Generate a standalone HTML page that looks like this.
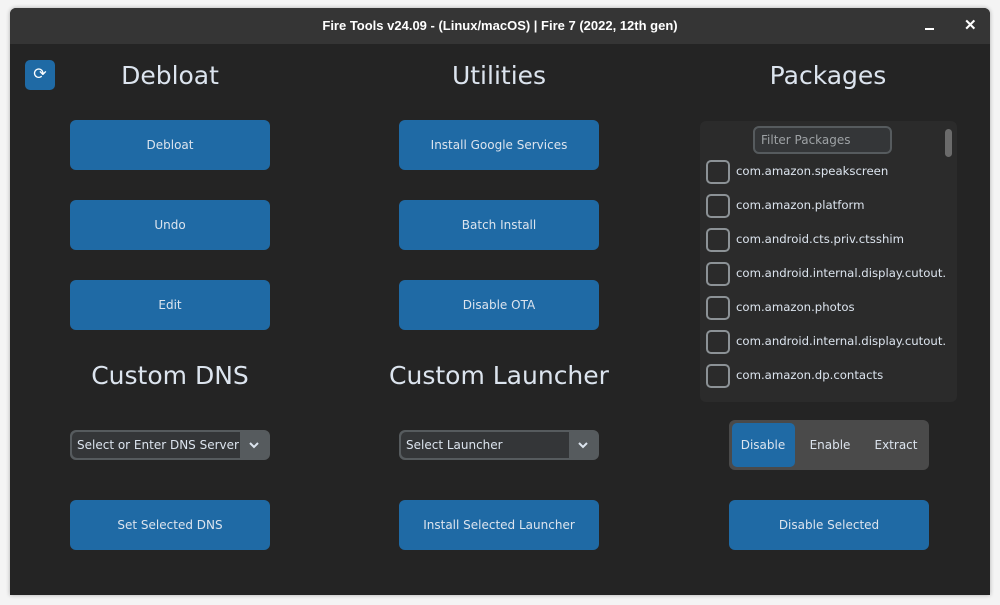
<!DOCTYPE html><html><head><style>
body{margin:0;width:1000px;height:605px;background:#f4f4f4;font-family:"Liberation Sans",sans-serif;position:relative;overflow:hidden}
.win{position:absolute;left:10px;top:8px;width:980px;height:587px;background:#242424;border-radius:6px 6px 0 0;overflow:hidden;box-shadow:0 0 4px rgba(0,0,0,.3)}
.tb{position:absolute;left:0;top:0;width:980px;height:36px;background:#353535;color:#fff;font-size:13px;font-weight:bold;text-align:center;line-height:36px}
.a{position:absolute}
.h{position:absolute;width:260px;text-align:center;color:#dce4ee;font-size:25px;font-family:"DejaVu Sans",sans-serif}
.b{position:absolute;width:200px;height:50px;background:#1f6aa5;border-radius:6px;color:#dce4ee;text-align:center;line-height:50px;font-family:"DejaVu Sans",sans-serif;font-size:12px}
.cb{position:absolute;width:200px;height:30px;border-radius:6px;background:#565b5e;}
.cb .t{position:absolute;left:2px;top:2px;width:168px;height:26px;background:#343638;border-radius:5px 0 0 5px;color:#dce4ee;line-height:26px;padding-left:5px;box-sizing:border-box;font-family:"DejaVu Sans",sans-serif;font-size:12px;white-space:nowrap;overflow:hidden}
.pk{position:absolute;left:6px;width:20px;height:20px;border:2px solid #8c9296;border-radius:5px}
.pl{position:absolute;left:36px;color:#dce4ee;font-size:11.7px;font-family:"DejaVu Sans",sans-serif;white-space:nowrap}
</style></head><body>
<div class="win">
<div class="tb">Fire Tools v24.09 - (Linux/macOS) | Fire 7 (2022, 12th gen)</div>
<div class="a" style="left:915px;width:9px;height:2px;background:#fff;top:20px"></div>
<div class="a" style="left:954px;top:8px;color:#fff;font-size:15px;font-weight:bold">✕</div>
<div class="a" style="left:15px;top:52px;width:30px;height:30px;background:#1f6aa5;border-radius:5px;color:#fff;text-align:center;line-height:30px;font-size:16px">⟳</div>
<div class="h" style="left:30px;top:53px">Debloat</div>
<div class="h" style="left:359px;top:53px">Utilities</div>
<div class="h" style="left:688px;top:53px">Packages</div>
<div class="h" style="left:30px;top:353px">Custom DNS</div>
<div class="h" style="left:339px;width:300px;top:353px">Custom Launcher</div>
<div class="b" style="left:60px;top:112px">Debloat</div>
<div class="b" style="left:60px;top:192px">Undo</div>
<div class="b" style="left:60px;top:272px">Edit</div>
<div class="b" style="left:389px;top:112px">Install Google Services</div>
<div class="b" style="left:389px;top:192px">Batch Install</div>
<div class="b" style="left:389px;top:272px">Disable OTA</div>
<div class="cb" style="left:60px;top:422px"><div class="t">Select or Enter DNS Server</div><svg class="a" style="left:178px;top:10px" width="12" height="10"><path d="M2 3l4 4 4-4" stroke="#dce4ee" stroke-width="2" fill="none"/></svg></div>
<div class="cb" style="left:389px;top:422px"><div class="t">Select Launcher</div><svg class="a" style="left:178px;top:10px" width="12" height="10"><path d="M2 3l4 4 4-4" stroke="#dce4ee" stroke-width="2" fill="none"/></svg></div>
<div class="b" style="left:60px;top:492px">Set Selected DNS</div>
<div class="b" style="left:389px;top:492px">Install Selected Launcher</div>
<div class="a" style="left:690px;top:113px;width:257px;height:281px;background:#2b2b2b;border-radius:6px;overflow:hidden">
<div class="a" style="left:53px;top:5px;width:139px;height:28px;border:2px solid #565b5e;border-radius:6px;background:#343638;box-sizing:border-box;color:#9ea2a5;font-size:12px;line-height:24px;padding-left:6px;font-family:'DejaVu Sans',sans-serif">Filter Packages</div>
<div class="a" style="left:245px;top:8px;width:7px;height:28px;background:#6b6b6b;border-radius:4px"></div>
<div class="pk" style="top:39px"></div><div class="pl" style="top:43px">com.amazon.speakscreen</div>
<div class="pk" style="top:73px"></div><div class="pl" style="top:77px">com.amazon.platform</div>
<div class="pk" style="top:107px"></div><div class="pl" style="top:111px">com.android.cts.priv.ctsshim</div>
<div class="pk" style="top:141px"></div><div class="pl" style="top:145px">com.android.internal.display.cutout.</div>
<div class="pk" style="top:175px"></div><div class="pl" style="top:179px">com.amazon.photos</div>
<div class="pk" style="top:209px"></div><div class="pl" style="top:213px">com.android.internal.display.cutout.</div>
<div class="pk" style="top:243px"></div><div class="pl" style="top:247px">com.amazon.dp.contacts</div>
</div>
<div class="a" style="left:719px;top:412px;width:200px;height:50px;background:#4a4a4a;border-radius:6px"></div>
<div class="a" style="left:722px;top:415px;width:63px;height:44px;background:#1f6aa5;border-radius:5px"></div>
<div class="a" style="left:719px;top:412px;width:68px;line-height:50px;text-align:center;color:#dce4ee;font-size:12px;font-family:'DejaVu Sans',sans-serif">Disable</div>
<div class="a" style="left:787px;top:412px;width:66px;line-height:50px;text-align:center;color:#dce4ee;font-size:12px;font-family:'DejaVu Sans',sans-serif">Enable</div>
<div class="a" style="left:853px;top:412px;width:66px;line-height:50px;text-align:center;color:#dce4ee;font-size:12px;font-family:'DejaVu Sans',sans-serif">Extract</div>
<div class="b" style="left:719px;top:492px">Disable Selected</div>
</div>
</body></html>
